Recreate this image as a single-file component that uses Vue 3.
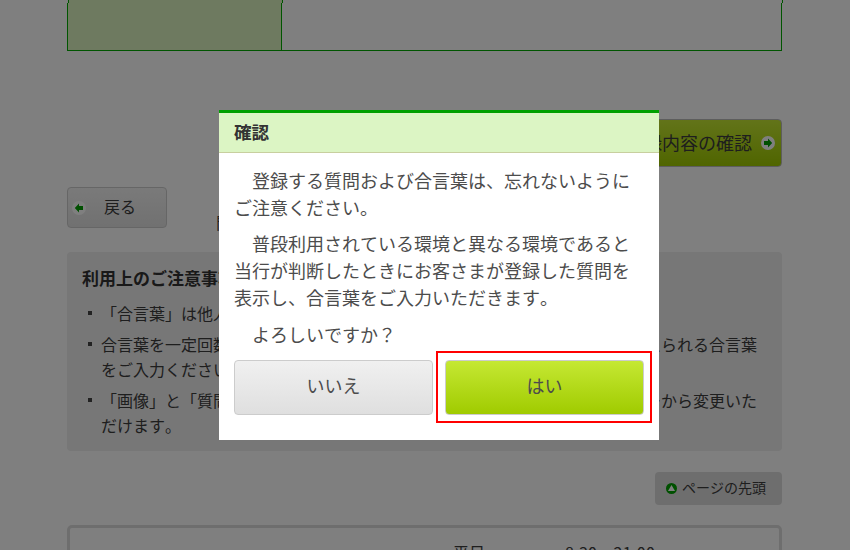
<script setup>
const notes = [
  ['「合言葉」は他人に知られないように設定してください。'],
  ['合言葉を一定回数以上誤って入力すると、ご利用いただけなくなります。覚えられる合言葉をご入力ください。'],
  ['「画像」と「質問」は、ご登録後にログイン後のお客さま情報の設定メニューから変更いただけます。'],
]
</script>

<template>
  <div class="page">
    <div class="tabs-head">
      <div class="head-active"></div>
      <div></div>
    </div>
    <div class="tabs">
      <div class="tab-active"></div>
      <div class="tab-rest"></div>
    </div>

    <div class="next-row">
      <button class="next" type="button">
        <span>登録内容の確認</span>
        <svg class="ic" viewBox="0 0 14 14"><circle cx="7" cy="7" r="7" fill="#fff"/><path d="M3 5H7V2.6L11.2 7 7 11.4V9H3z" fill="#00a000"/></svg>
      </button>
    </div>

    <div class="back-row">
      <button class="back" type="button">
        <svg class="ic" viewBox="0 0 14 14"><circle cx="7" cy="7" r="7" fill="#fff"/><path d="M11 5H7V2.6L2.8 7 7 11.4V9H11z" fill="#00a000"/></svg>
        <span>戻る</span>
      </button>
      <span class="peek">問</span>
    </div>

    <section class="notes">
      <h2>利用上のご注意事項</h2>
      <ul>
        <li v-for="n in notes" :key="n[0]"><i class="bullet"></i><span>{{ n[0] }}</span></li>
      </ul>
    </section>

    <div class="top-row">
      <a class="top">
        <svg class="ic-small" viewBox="0 0 11 11"><circle cx="5.5" cy="5.5" r="5.5" fill="#00a000"/><path d="M5.5 2L9 8H2z" fill="#fff"/></svg>
        <span>ページの先頭</span>
      </a>
    </div>

    <div class="hours">
      <b>平日</b>
      <span class="time">8:30～21:00</span>
    </div>
  </div>

  <div class="overlay">
    <div class="dialog">
      <header>確認</header>
      <div class="body">
        <p>登録する質問および合言葉は、忘れないようにご注意ください。</p>
        <p>普段利用されている環境と異なる環境であると当行が判断したときにお客さまが登録した質問を表示し、合言葉をご入力いただきます。</p>
        <p>よろしいですか？</p>
      </div>
      <div class="actions">
        <button class="no" type="button">いいえ</button>
        <div class="focus"><button class="yes" type="button">はい</button></div>
      </div>
    </div>
  </div>
</template>

<style>
html, body { margin: 0; height: 100%; overflow: hidden; background: #fff; }
</style>

<style scoped>
.page {
  width: 715px;
  margin-left: 67px;
  font-family: "Noto Sans CJK JP", "Noto Sans", sans-serif;
  font-kerning: none;
  color: #3c3c3c;
  font-size: 16px;
}
button { font-family: inherit; color: inherit; cursor: pointer; }
.ic { width: 14px; height: 14px; flex: none; display: block; }
.ic-small { width: 11px; height: 11px; flex: none; display: block; }

.tabs-head {
  display: grid;
  grid-template-columns: 214px 1fr;
  height: 3px;
  margin-left: 1px;
  margin-right: -1px;
  box-sizing: border-box;
  border-left: 1px solid #00aa00;
  border-right: 1px solid #00aa00;
}
.head-active { background: #dcf5c0; border-right: 1px solid #00aa00; }
.tabs {
  display: grid;
  grid-template-columns: 214px 1fr;
  height: 48px;
  box-sizing: border-box;
  border: 1px solid #00aa00;
  border-top: 0;
}
.tab-active { background: #dcf5c0; border-right: 1px solid #00aa00; }

.next-row { display: flex; justify-content: flex-end; margin-top: 68px; }
.next {
  display: flex;
  align-items: center;
  justify-content: flex-end;
  gap: 9px;
  width: 300px;
  height: 48px;
  padding: 0 6px 0 0;
  border: 1px solid #bbb;
  border-radius: 4px;
  background: linear-gradient(#c5e833, #a0cb00);
  font-size: 18px;
  line-height: 1;
}
.next span { margin-bottom: 2px; }

.back-row { display: flex; align-items: flex-end; margin-top: 20px; height: 41px; }
.back {
  display: flex;
  align-items: center;
  gap: 18px;
  width: 100px;
  height: 41px;
  padding: 0 0 0 4px;
  border: 1px solid #ccc;
  border-radius: 4px;
  background: linear-gradient(#f4f4f4, #e2e2e2);
  font-size: 16px;
}
.back span { margin-bottom: 3px; }
.peek { margin-left: 49px; line-height: 24px; margin-bottom: -6px; font-size: 16px; }

.notes {
  margin-top: 24px;
  height: 199px;
  box-sizing: border-box;
  padding: 14px 15px 0;
  background: #eee;
  border-radius: 4px;
}
.notes h2 { margin: 0 0 11px; font-size: 17px; line-height: 24px; font-weight: 700; color: #333; }
.notes ul { margin: 0; padding: 0; list-style: none; display: flex; flex-direction: column; gap: 6px; }
.notes li { display: flex; line-height: 25px; font-size: 16px; width: 676px; }
.bullet { flex: none; width: 4px; height: 4px; margin: 10px 9px 0 6px; background: #444; }

.top-row { display: flex; justify-content: flex-end; margin-top: 21px; }
.top {
  display: flex;
  align-items: center;
  gap: 5px;
  width: 127px;
  height: 33px;
  box-sizing: border-box;
  padding-left: 11px;
  background: #ddd;
  border-radius: 4px;
  font-size: 14px;
}
.top span { margin-bottom: 3px; }

.hours {
  display: flex;
  margin-top: 20px;
  height: 80px;
  box-sizing: border-box;
  padding: 12px 0 0 383px;
  border: 3px solid #ddd;
  border-radius: 5px;
  line-height: 24px;
  font-size: 16px;
}
.hours b { font-weight: 400; }
.time { margin-left: 80px; letter-spacing: .3px; }

.overlay {
  position: fixed;
  inset: 0;
  background: rgba(0, 0, 0, .5);
  padding: 110px 0 0 219px;
  font-family: "Noto Sans CJK JP", "Noto Sans", sans-serif;
  font-kerning: none;
}
.dialog {
  width: 440px;
  height: 330px;
  box-sizing: border-box;
  background: #fff;
  border-top: 3px solid #00a000;
  color: #4c4c4c;
}
.dialog header {
  height: 40px;
  box-sizing: border-box;
  padding-left: 15px;
  background: #dcf5c4;
  border-bottom: 1px solid #c8cf9f;
  font-size: 17.6px;
  font-weight: 700;
  line-height: 37px;
  color: #333;
}
.body { padding: 14px 15px 0 15px; }
.body p { margin: 0 0 9px; font-size: 18px; line-height: 27px; text-indent: 1em; }
.body p:last-child { margin-top: 10px; }
.actions { display: flex; gap: 12px; padding: 0 15px; margin-top: 12px; }
.actions button {
  width: 199px;
  height: 55px;
  padding: 0 0 6px;
  font-size: 18px;
  border: 1px solid #ccc;
  border-radius: 4px;
}
.no { background: linear-gradient(#f0f0f0, #dfdfdf); }
.focus { position: relative; display: flex; }
.focus::after {
  content: "";
  position: absolute;
  inset: -9px -8px -8px -9px;
  border: 2px solid #f00;
  pointer-events: none;
}
.yes { background: linear-gradient(#c5e833, #a0cb00); }
</style>
